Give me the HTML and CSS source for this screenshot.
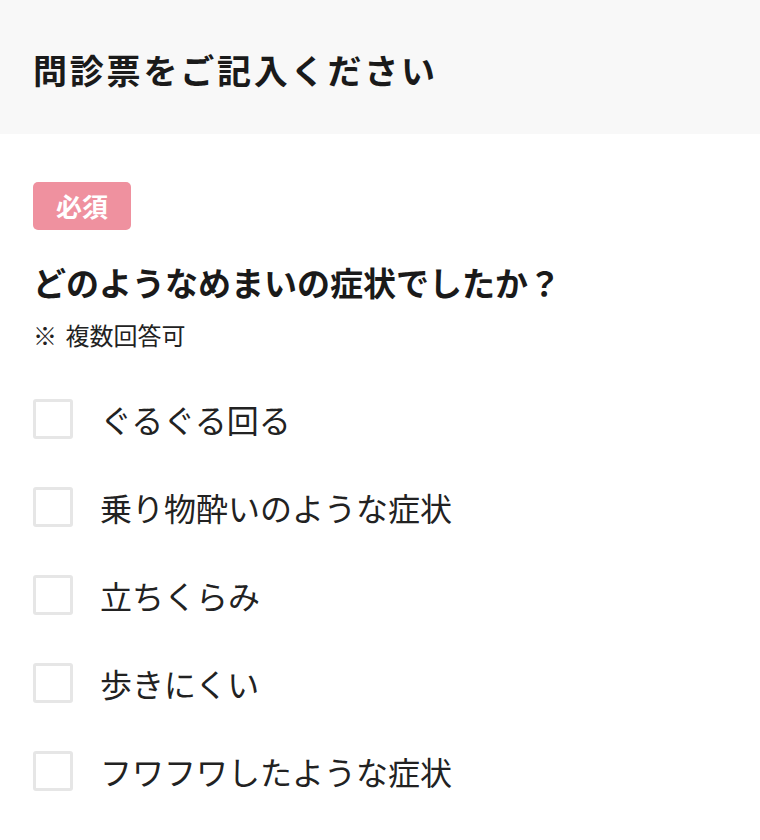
FILE: index.html
```html
<!DOCTYPE html>
<html lang="ja">
<head>
<meta charset="utf-8">
<link rel="stylesheet" href="styles.css">
</head>
<body>
<header class="page-header">
  <h1 class="page-title">問診票をご記入ください</h1>
</header>
<main class="content">
  <span class="badge">必須</span>
  <h2 class="question">どのようなめまいの症状でしたか？</h2>
  <p class="note">※ 複数回答可</p>
  <ul class="options">
    <li class="option"><span class="checkbox"></span><span class="label">ぐるぐる回る</span></li>
    <li class="option"><span class="checkbox"></span><span class="label">乗り物酔いのような症状</span></li>
    <li class="option"><span class="checkbox"></span><span class="label">立ちくらみ</span></li>
    <li class="option"><span class="checkbox"></span><span class="label">歩きにくい</span></li>
    <li class="option"><span class="checkbox"></span><span class="label">フワフワしたような症状</span></li>
  </ul>
</main>
</body>
</html>
```

FILE: styles.css
```css
* { box-sizing: border-box; }
html, body { margin: 0; padding: 0; background: #ffffff; }
body {
  font-family: "Noto Sans CJK JP", "Noto Sans", sans-serif;
  color: #1e1e1e;
}
.page-header {
  background: #f8f8f8;
  height: 134px;
  display: flex;
  align-items: center;
  padding-left: 33px;
  padding-top: 6px;
}
.page-title {
  margin: 0;
  font-size: 34px;
  font-weight: 700;
  line-height: 1;
  letter-spacing: 2.8px;
  color: #1a1a1a;
}
.content {
  padding: 48px 33px 0;
  display: flex;
  flex-direction: column;
  align-items: flex-start;
}
.badge {
  display: flex;
  align-items: center;
  justify-content: center;
  width: 98px;
  height: 48px;
  background: #ef919f;
  color: #ffffff;
  border-radius: 5px;
  font-size: 26px;
  font-weight: 700;
  line-height: 1;
}
.question {
  margin: 36px 0 0;
  font-size: 33px;
  font-weight: 700;
  line-height: 1;
  color: #1a1a1a;
}
.note {
  margin: 24px 0 0;
  font-size: 24px;
  line-height: 1;
  word-spacing: 3px;
  color: #222;
}
.options {
  list-style: none;
  margin: 52px 0 0;
  padding: 0;
  display: flex;
  flex-direction: column;
  gap: 48px;
}
.option {
  display: flex;
  align-items: center;
  gap: 27px;
  height: 40px;
}
.checkbox {
  width: 40px;
  height: 40px;
  border: 3px solid #e6e6e6;
  border-radius: 3px;
  background: #fff;
  flex: none;
}
.label {
  font-size: 32px;
  line-height: 1;
  color: #222;
}
```
